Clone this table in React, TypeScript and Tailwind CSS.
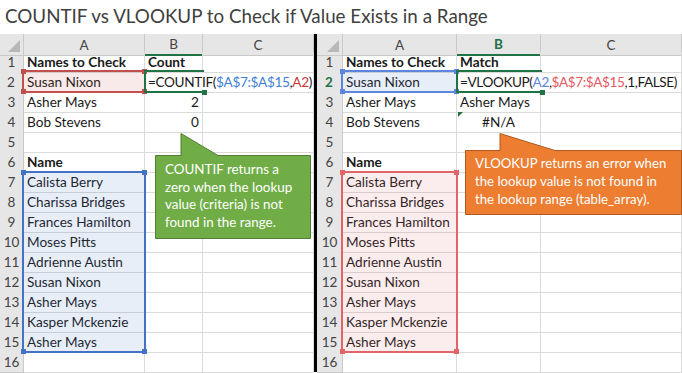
import React from 'react';

type Cell = {
  text?: React.ReactNode;
  bold?: boolean;
  align?: 'left' | 'right' | 'center';
  spill?: boolean;
};

const names = [
  'Calista Berry',
  'Charissa Bridges',
  'Frances Hamilton',
  'Moses Pitts',
  'Adrienne Austin',
  'Susan Nixon',
  'Asher Mays',
  'Kasper Mckenzie',
  'Asher Mays',
];

const colA: Cell[] = [
  { text: 'Names to Check', bold: true },
  { text: 'Susan Nixon' },
  { text: 'Asher Mays' },
  { text: 'Bob Stevens' },
  {},
  { text: 'Name', bold: true },
  ...names.map((n) => ({ text: n })),
  {},
];

const leftB: Cell[] = [
  { text: 'Count', bold: true },
  {
    spill: true,
    text: (
      <span className="tracking-[-0.35px]">
        =COUNTIF(<span className="text-[#3f7fd6]">$A$7:$A$15</span>,<span className="text-[#c8383e]">A2</span>)
      </span>
    ),
  },
  { text: '2', align: 'right' },
  { text: '0', align: 'right' },
];

const rightB: Cell[] = [
  { text: 'Match', bold: true },
  {
    spill: true,
    text: (
      <span className="tracking-[-0.4px]">
        =VLOOKUP(<span className="text-[#5b86dc]">A2</span>,<span className="text-[#e5595f]">$A$7:$A$15</span>,1,FALSE)
      </span>
    ),
  },
  { text: 'Asher Mays' },
  { text: '#N/A', align: 'center' },
];

const headCls =
  'bg-[#e6e6e6] border-r border-b border-[#cacaca] flex items-center justify-center text-[13.5px] text-[#444]';
const cellCls =
  'border-r border-b border-[#dadada] px-[3px] flex items-center whitespace-nowrap text-[13.6px] text-[#1a1a1a]';

function DataCell({ cell, mark }: { cell?: Cell; mark?: boolean }) {
  const c = cell ?? {};
  const align =
    c.align === 'right' ? 'justify-end' : c.align === 'center' ? 'justify-center' : 'justify-start';
  return (
    <div
      className={`${cellCls} ${align} relative ${c.bold ? 'font-bold' : ''} ${c.spill ? 'border-r-transparent z-10' : ''}`}
    >
      {c.text}
      {mark && (
        <svg width="5" height="5" className="absolute left-[1px] top-0">
          <polygon points="0,0 5,0 0,5" fill="#217346" />
        </svg>
      )}
    </div>
  );
}

function Corner() {
  return (
    <div className={`${headCls} relative`}>
      <svg width="12" height="12" className="absolute right-[3px] bottom-[3px]">
        <polygon points="12,0 12,12 0,12" fill="#b8b8b8" />
      </svg>
    </div>
  );
}

function Sheet({ cols, bCells, strong }: { cols: string; bCells: Cell[]; strong: boolean }) {
  return (
    <div className="flex flex-col">
      <div className={`grid ${cols} h-[18px]`}>
        <Corner />
        <div className={headCls}>A</div>
        <div
          className={`${headCls} bg-[#d2d2d2] border-b-2 border-b-[#217346] ${strong ? 'font-bold text-[#217346]' : 'text-[#2f5f45]'}`}
        >
          B
        </div>
        <div className={headCls}>C</div>
      </div>
      {colA.map((a, i) => (
        <div key={i} className={`grid ${cols} h-[20px]`}>
          <div
            className={`${headCls} ${i === 1 ? 'bg-[#d2d2d2] border-r-2 border-r-[#217346]' : ''} ${i === 1 && strong ? 'font-bold text-[#217346]' : ''}`}
          >
            {i + 1}
          </div>
          <DataCell cell={a} />
          <DataCell cell={bCells[i]} mark={strong && i === 3} />
          <DataCell />
        </div>
      ))}
    </div>
  );
}

// range outline drawn over the cells, with the little square handles at its corners
function Range({ className, color, fill }: { className: string; color: string; fill: string }) {
  const h = 'absolute w-[5px] h-[5px]';
  return (
    <div className={`absolute border-2 z-20 ${className}`} style={{ borderColor: color, background: fill }}>
      <div className={`${h} -left-[3px] -top-[3px]`} style={{ background: color }} />
      <div className={`${h} -right-[3px] -top-[3px]`} style={{ background: color }} />
      <div className={`${h} -left-[3px] -bottom-[3px]`} style={{ background: color }} />
      <div className={`${h} -right-[3px] -bottom-[3px]`} style={{ background: color }} />
    </div>
  );
}

function ActiveCell({ className }: { className: string }) {
  return (
    <div className={`absolute border-l-2 border-y-2 border-[#217346] z-30 ${className}`}>
      <div className="absolute -right-[3px] -bottom-[4px] w-[5px] h-[5px] bg-[#217346]" />
    </div>
  );
}

export default function App() {
  return (
    <div className="relative w-[682px] h-[373px] overflow-hidden bg-white font-[family-name:Lato,'Noto_Sans',sans-serif]">
      <div className="h-[34px] pl-[5px] text-[18.8px] leading-[32px] text-[#404040] whitespace-nowrap">
        COUNTIF vs VLOOKUP to Check if Value Exists in a Range
      </div>
      <div className="flex">
        <div className="w-[314px]">
          <Sheet cols="grid-cols-[24px_121px_58px_111px]" bCells={leftB} strong={false} />
        </div>
        <div className="w-[3px] bg-black" />
        <div className="flex-1">
          <Sheet cols="grid-cols-[26px_114px_84px_141px]" bCells={rightB} strong />
        </div>
      </div>

      {/* left sheet */}
      <Range className="left-[22px] top-[70px] w-[124px] h-[23px]" color="#c0504d" fill="rgba(192,80,77,0.12)" />
      <Range className="left-[22px] top-[171px] w-[124px] h-[182px]" color="#4472c4" fill="rgba(68,114,196,0.12)" />
      <ActiveCell className="left-[144px] top-[70px] w-[60px] h-[23px]" />

      {/* right sheet */}
      <Range className="left-[341px] top-[70px] w-[117px] h-[23px]" color="#5b86dc" fill="rgba(68,114,196,0.12)" />
      <Range className="left-[341px] top-[171px] w-[117px] h-[182px]" color="#e06468" fill="rgba(224,100,104,0.12)" />
      <ActiveCell className="left-[456px] top-[70px] w-[86px] h-[23px]" />

      {/* COUNTIF callout */}
      <div className="absolute left-[155px] top-[133px] w-[156px] h-[107px] z-40">
        <svg width="156" height="107" className="absolute inset-0">
          <path d="M0.5,22.5 H26 V0.5 L63,22.5 H155.5 V105.5 H0.5 Z" fill="#70ad47" stroke="#507e32" />
        </svg>
        <div className="relative pt-[28px] pl-[10px] text-[13.4px] leading-[17.5px] text-white whitespace-nowrap">
          COUNTIF returns a
          <br />
          zero when the lookup
          <br />
          value (criteria) is not
          <br />
          found in the range.
        </div>
      </div>

      {/* VLOOKUP callout */}
      <div className="absolute left-[465px] top-[133px] w-[217px] h-[83px] z-40">
        <svg width="217" height="83" className="absolute inset-0">
          <path d="M0.5,17.5 H35 V0.5 L90,17.5 H216.5 V81.5 H0.5 Z" fill="#ed7d31" stroke="#ae5a21" />
        </svg>
        <div className="relative pt-[21px] pl-[10px] text-[13.2px] leading-[18px] text-white whitespace-nowrap">
          VLOOKUP returns an error when
          <br />
          the lookup value is not found in
          <br />
          the lookup range (table_array).
        </div>
      </div>
    </div>
  );
}
